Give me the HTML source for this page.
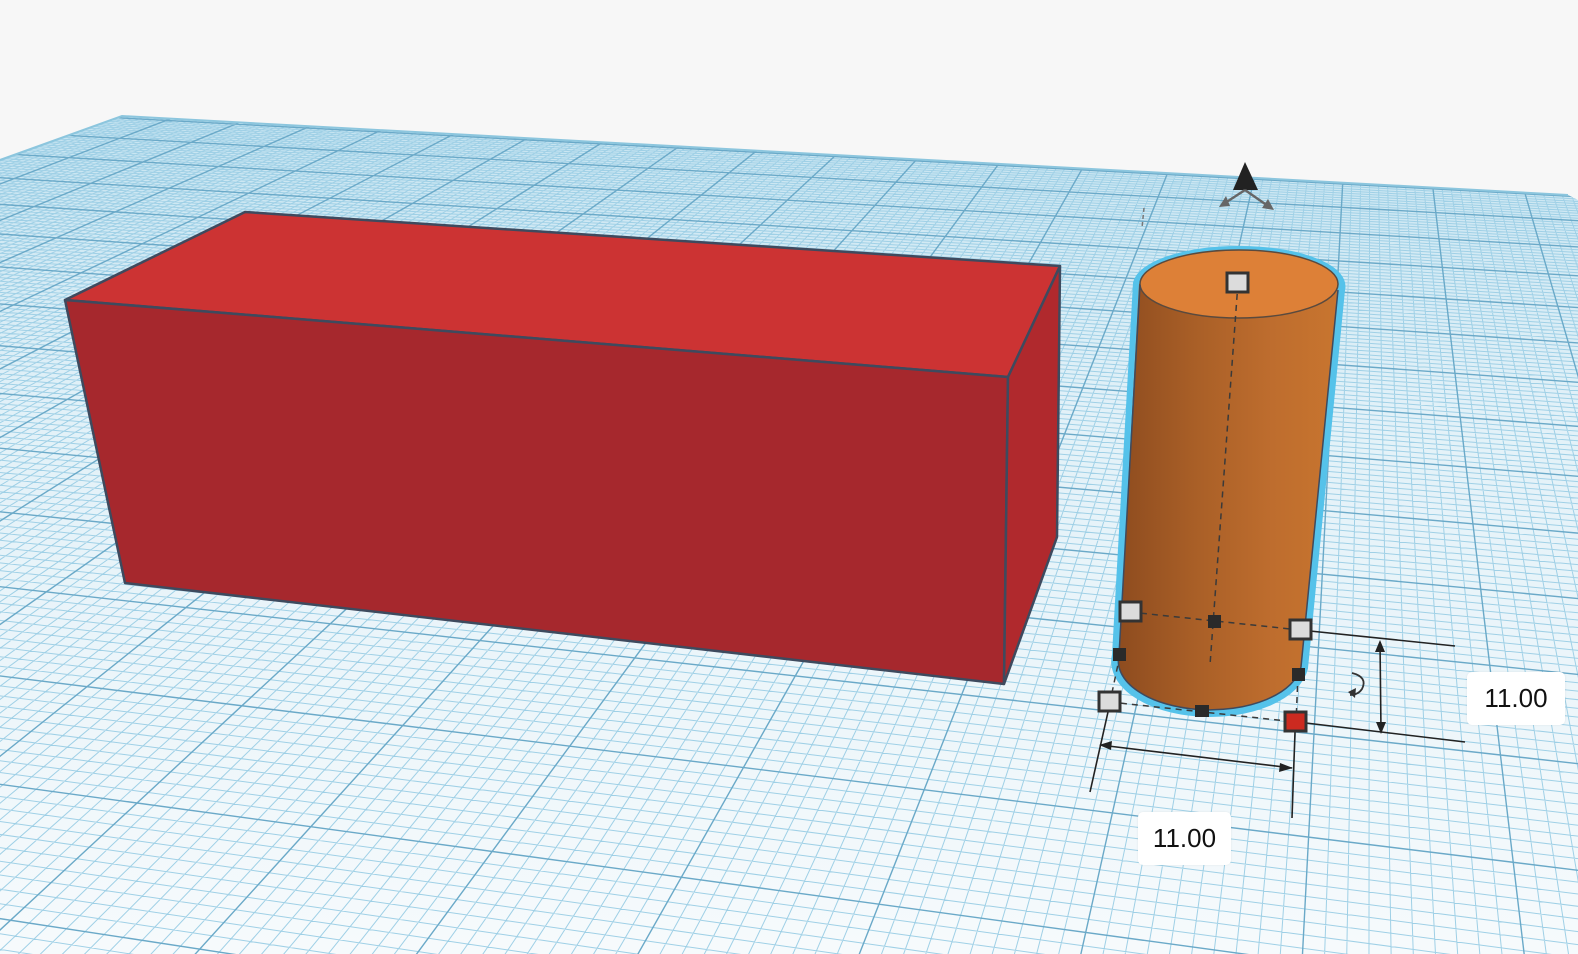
<!DOCTYPE html>
<html><head><meta charset="utf-8"><style>
html,body{margin:0;padding:0;background:#f7f7f7;width:1578px;height:954px;overflow:hidden;position:relative}
svg{display:block;position:absolute;left:0;top:0}
.lbl{position:absolute;background:#fff;border-radius:5px;font-family:"Liberation Sans",sans-serif;font-size:26px;color:#111;text-align:center;box-shadow:0 0 2px rgba(0,0,0,.08)}
</style></head><body>
<svg id="s" width="1578" height="954" viewBox="0 0 1578 954" xmlns="http://www.w3.org/2000/svg">
<defs>
<clipPath id="pl"><polygon points="0,160 122,116 1568,195 1578,200 1578,954 0,954"/></clipPath>
<linearGradient id="cyl" x1="0" x2="1" y1="0" y2="0">
<stop offset="0" stop-color="#8e4c1f"/><stop offset="0.35" stop-color="#a95f27"/><stop offset="0.7" stop-color="#be6d2e"/><stop offset="1" stop-color="#c8752f"/>
</linearGradient>
<linearGradient id="pf" x1="0" x2="0" y1="0" y2="1" gradientUnits="userSpaceOnUse" x2u="0">
</linearGradient>
<linearGradient id="pg" gradientUnits="userSpaceOnUse" x1="0" y1="120" x2="0" y2="954">
<stop offset="0" stop-color="#c6e4f1"/><stop offset="0.35" stop-color="#e2f1f8"/><stop offset="1" stop-color="#f6fafc"/>
</linearGradient>
</defs>
<polygon points="0,160 122,116 1568,195 1578,200 1578,954 0,954" fill="url(#pg)"/>
<g id="grid" clip-path="url(#pl)"></g>
<polyline points="0,160 122,116 1568,195" fill="none" stroke="#8cc6de" stroke-width="2"/>

<g stroke="#3e4a5e" stroke-width="2.5" stroke-linejoin="round">
<polygon points="65,300 245,212 1060,266 1008,377" fill="#cc3333"/>
<polygon points="65,300 1008,377 1004,684 125,583" fill="#a6282d"/>
<polygon points="1008,377 1060,266 1057,537 1004,684" fill="#b0292d"/>
</g>

<g>
<path d="M1137,283 L1116,655 A92,50 0 0 0 1304,668 L1341,290 A101,36 0 0 0 1137,283 Z" fill="none" stroke="#55c2ea" stroke-width="8" stroke-linejoin="round"/>
<path d="M1139,284 L1119,655 A90,48 0 0 0 1301,667 L1338,290 Z" fill="url(#cyl)"/>
<ellipse cx="1239" cy="284" rx="99" ry="34" fill="#dd8037" stroke="#5a4a3e" stroke-width="1.5"/>
<path d="M1140,285 L1119,655 A90,48 0 0 0 1301,667 L1338,290" fill="none" stroke="#3e4a5e" stroke-width="1.5"/>
</g>

<g stroke="#3a3a3a" stroke-width="1.5" stroke-dasharray="6,5" fill="none">
<line x1="1238" y1="283" x2="1210" y2="665"/>
<line x1="1130" y1="612" x2="1300" y2="630"/>
<line x1="1110" y1="702" x2="1296" y2="722"/>
<line x1="1120" y1="655" x2="1110" y2="702"/>
<line x1="1298" y1="675" x2="1296" y2="722"/>
</g>
<g stroke="#222" stroke-width="1.6" fill="none">
<line x1="1310" y1="631" x2="1455" y2="646"/>
<line x1="1306" y1="723" x2="1465" y2="742"/>
<line x1="1380" y1="642" x2="1381" y2="732"/>
<line x1="1108" y1="712" x2="1090" y2="792"/>
<line x1="1295" y1="732" x2="1292" y2="818"/>
<line x1="1100" y1="745" x2="1292" y2="768"/>
</g>
<g fill="#222">
<polygon points="1380,640 1375,652 1385,652"/>
<polygon points="1381,734 1376,722 1386,722"/>
<polygon points="1099,745 1112,741 1111,750"/>
<polygon points="1293,768 1280,763 1279,772"/>
</g>
<path d="M1352,673 q16,4 10,16 q-4,6 -12,6" fill="none" stroke="#333" stroke-width="1.8"/>
<polygon points="1348,692 1356,688 1355,698" fill="#333"/>

<g stroke="#333" stroke-width="3">
<rect x="1227" y="273" width="21" height="19" fill="#dcdcdc"/>
<rect x="1120" y="602" width="21" height="19" fill="#dcdcdc"/>
<rect x="1290" y="620" width="21" height="19" fill="#dcdcdc"/>
<rect x="1099" y="692" width="21" height="19" fill="#dcdcdc"/>
<rect x="1285" y="712" width="21" height="19" fill="#cc2a20"/>
</g>
<g fill="#2a2a2a">
<rect x="1208" y="615" width="13" height="13"/>
<rect x="1113" y="648" width="13" height="13"/>
<rect x="1292" y="668" width="13" height="13"/>
<rect x="1195" y="705" width="14" height="12"/>
</g>

<polygon points="1245,162 1233,190 1258,190" fill="#222"/>
<g stroke="#666" stroke-width="2.5" fill="#666">
<line x1="1245" y1="190" x2="1225" y2="203"/>
<line x1="1245" y1="190" x2="1268" y2="206"/>
</g>
<polygon points="1219,207 1226,196 1230,206" fill="#666"/>
<polygon points="1274,210 1262,208 1268,199" fill="#666"/>
<line x1="1144" y1="208" x2="1142" y2="228" stroke="#777" stroke-width="1.5" stroke-dasharray="4,3"/>
</svg>
<div class="lbl" style="left:1467px;top:672px;width:98px;height:53px;line-height:53px">11.00</div>
<div class="lbl" style="left:1138px;top:812px;width:93px;height:53px;line-height:53px">11.00</div>
<script>
(function(){
var O=[137,803],V1=[1370,-340],V2=[-8170,-330],a=-0.0205,b=0.093;
function P(u,v){var d=1+u*a+v*b;return[(O[0]+u*a*V2[0]+v*b*V1[0])/d,(O[1]+u*a*V2[1]+v*b*V1[1])/d];}
function inv(x,y){
 var A=a*(V2[0]-x),B=b*(V1[0]-x),C=a*(V2[1]-y),D=b*(V1[1]-y),e=x-O[0],f=y-O[1];
 var det=A*D-B*C;return[(e*D-B*f)/det,(A*f-C*e)/det];}
var pts=[[0,160],[122,116],[1578,200],[1578,954],[0,954]];
var umin=1e9,umax=-1e9,vmin=1e9,vmax=-1e9;
pts.forEach(function(p){var r=inv(p[0],p[1]);umin=Math.min(umin,r[0]);umax=Math.max(umax,r[0]);vmin=Math.min(vmin,r[1]);vmax=Math.max(vmax,r[1]);});
umin=Math.floor(umin)-1;umax=Math.ceil(umax)+1;vmin=Math.floor(vmin)-1;vmax=Math.ceil(vmax)+1;
var minor='',major='';
function seg(p,q){return 'M'+p[0].toFixed(1)+','+p[1].toFixed(1)+'L'+q[0].toFixed(1)+','+q[1].toFixed(1);}
for(var i=Math.round(umin*10);i<=umax*10;i++){var u=i/10;var s=seg(P(u,vmin),P(u,vmax));if(i%10==0)major+=s;else minor+=s;}
for(var j=Math.round(vmin*10);j<=vmax*10;j++){var v=j/10;var s=seg(P(umin,v),P(umax,v));if(j%10==0)major+=s;else minor+=s;}
var g=document.getElementById('grid');
g.innerHTML='<path d="'+minor+'" stroke="#9fd0e6" stroke-width="1" fill="none"/><path d="'+major+'" stroke="#6aa9c8" stroke-width="1.4" fill="none"/>';
})();
</script>
</body></html>
